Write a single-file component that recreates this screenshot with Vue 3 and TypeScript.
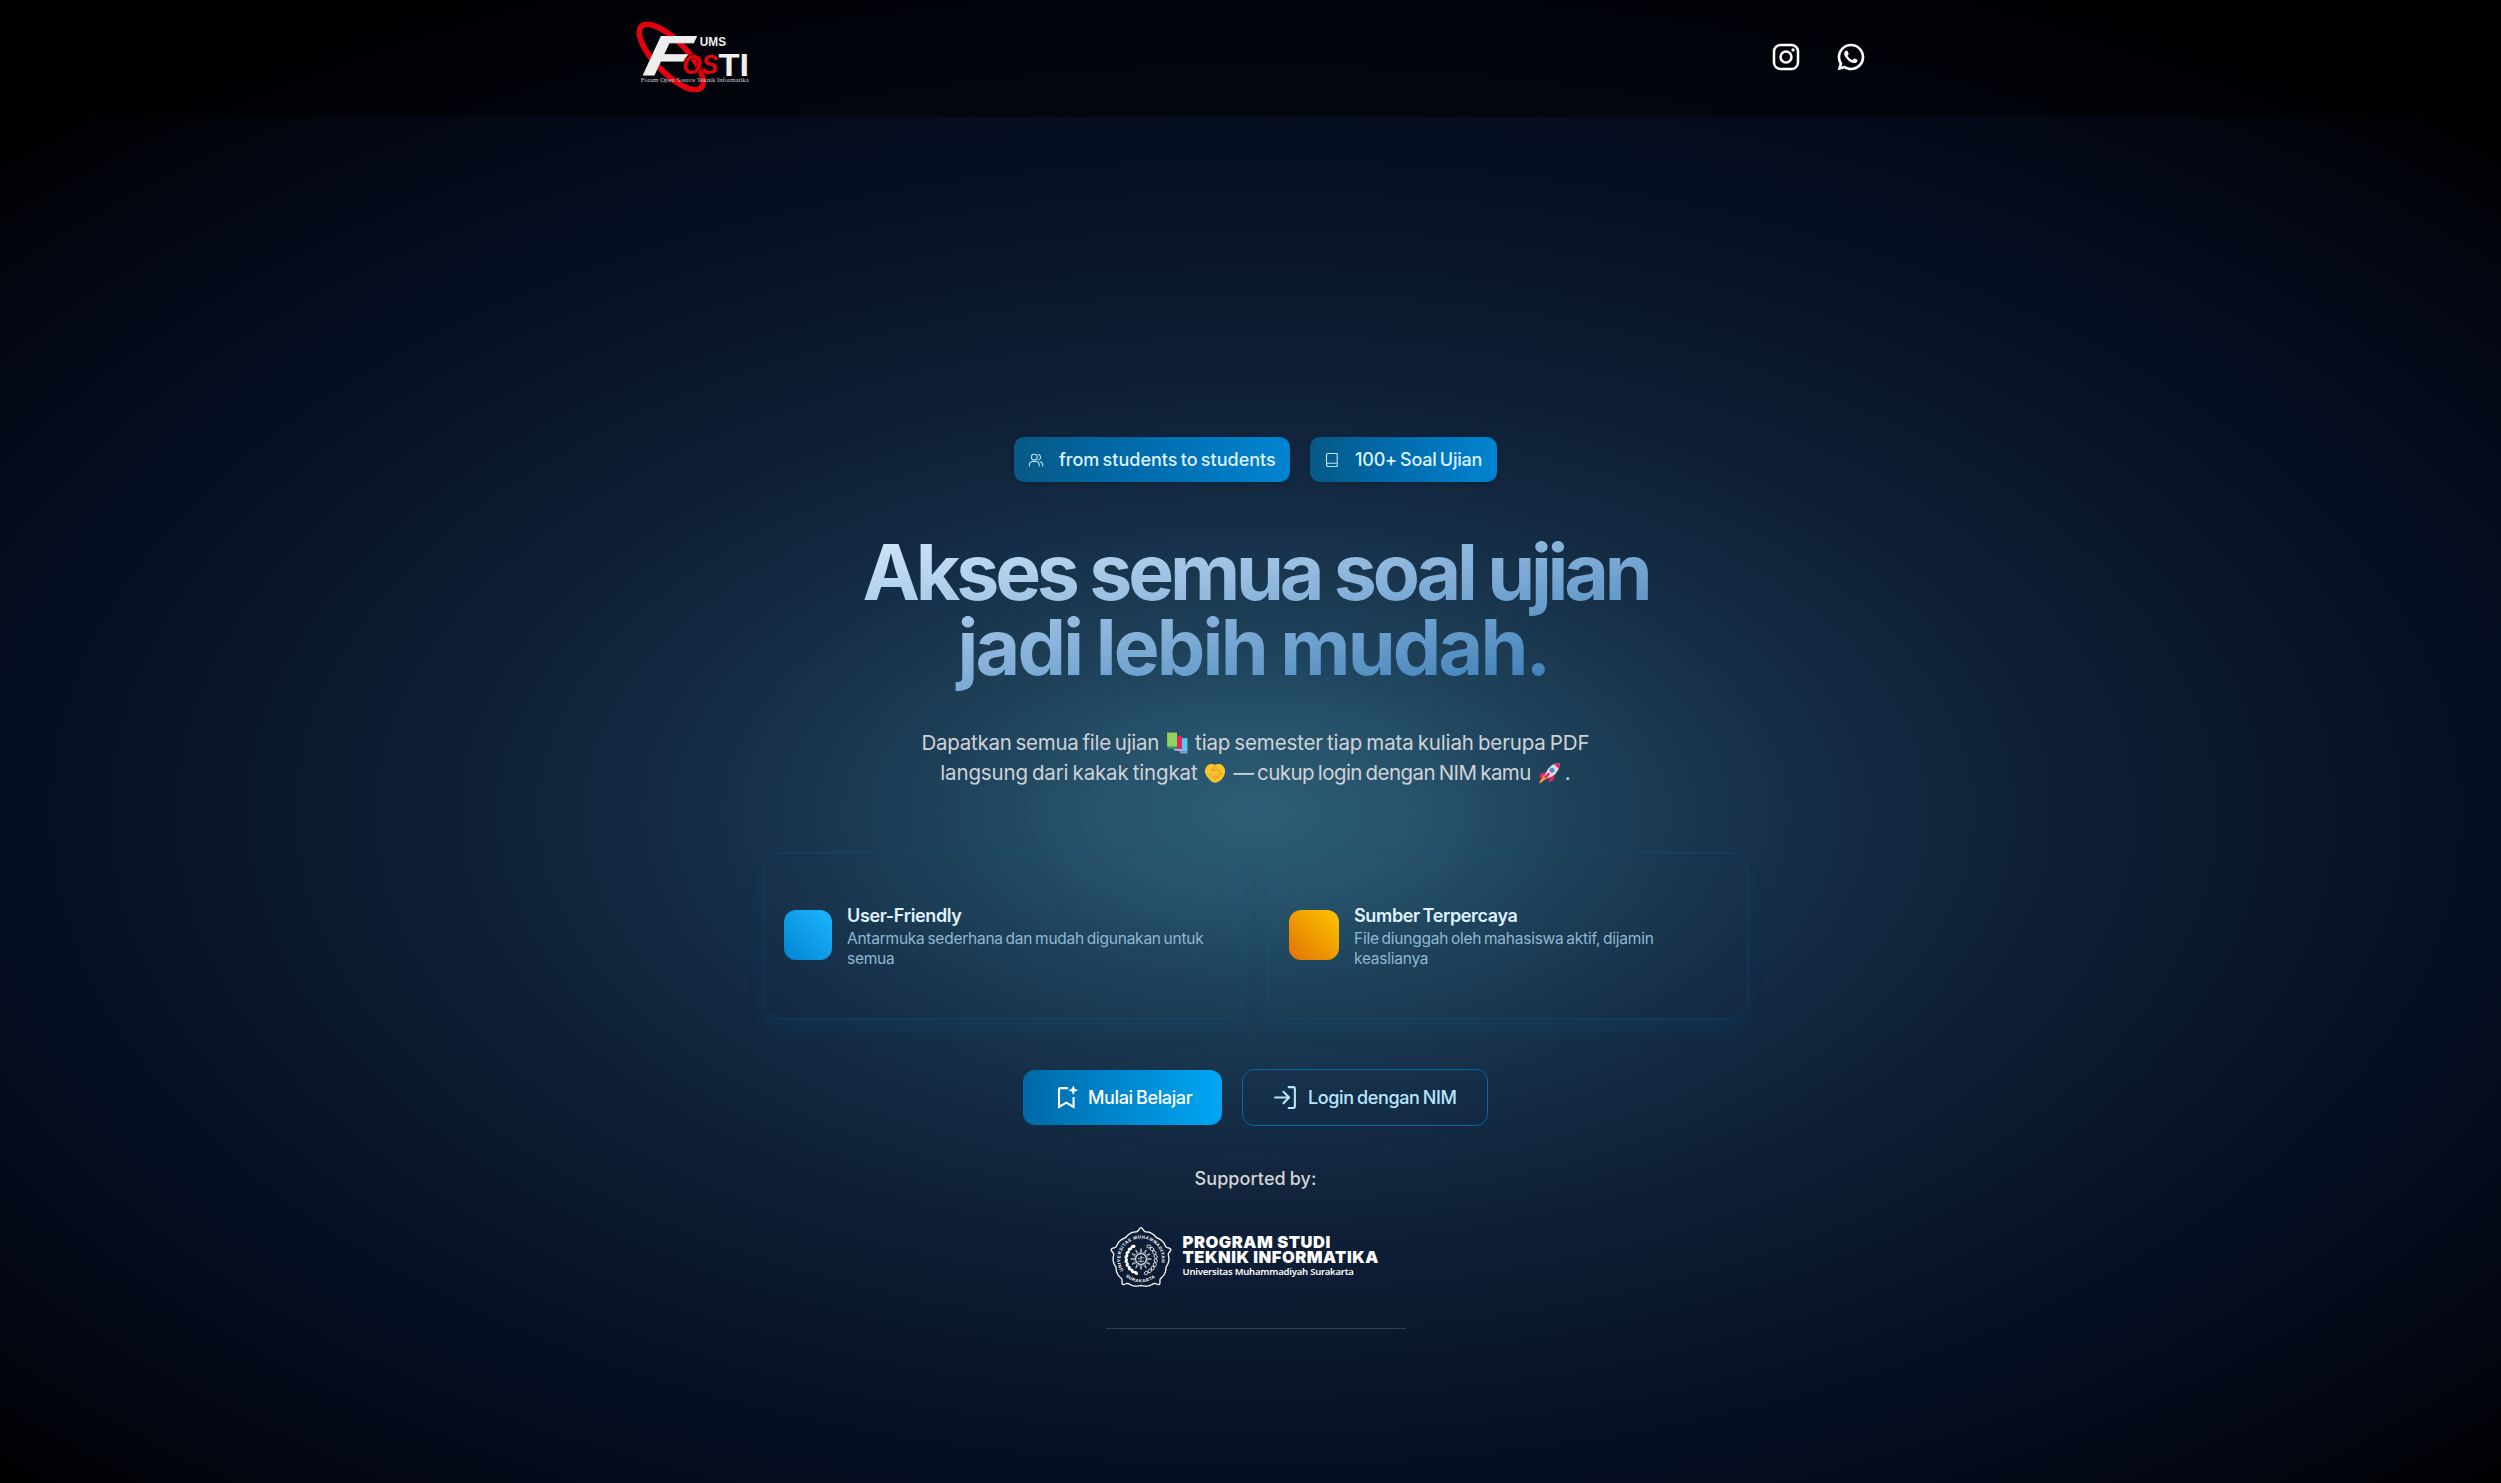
<script setup lang="ts">
interface Feature {
  title: string
  lines: string[]
  tone: string
}

const features: Feature[] = [
  {
    title: 'User-Friendly',
    lines: ['Antarmuka sederhana dan mudah digunakan untuk', 'semua'],
    tone: 'blue',
  },
  {
    title: 'Sumber Terpercaya',
    lines: ['File diunggah oleh mahasiswa aktif, dijamin', 'keaslianya'],
    tone: 'amber',
  },
]

// Outline of the university crest: five cusps joined by pairs of shallow lobes.
function crestOutline(): string {
  const points: string[] = []
  for (let deg = 0; deg < 360; deg += 2) {
    const delta = ((deg + 36) % 72) - 36
    const r =
      26.3 + 1.6 * Math.abs(Math.sin((5 * delta * Math.PI) / 180)) + 5 * Math.exp(-((delta / 5) ** 2))
    const a = ((deg - 90) * Math.PI) / 180
    points.push(`${(32 + r * Math.cos(a)).toFixed(2)},${(32 + r * Math.sin(a)).toFixed(2)}`)
  }
  return points.join(' ')
}

const outline = crestOutline()
const rays = Array.from({ length: 12 }, (_, i) => i * 30)
const leaves = Array.from({ length: 9 }, (_, i) => i * 16 + 20)
</script>

<template>
  <div class="page">
    <header class="topbar">
      <div class="bar-inner">
        <svg class="fosti" viewBox="78 66 340 210">
          <ellipse cx="184" cy="171" rx="129" ry="48" transform="rotate(46 184 171)" fill="none" stroke="#e3000f" stroke-width="17" />
          <text transform="translate(97 226) skewX(-12) scale(1.3 1)" class="lg-f">F</text>
          <text x="217" y="223" class="lg-os" textLength="108" lengthAdjust="spacingAndGlyphs">OS</text>
          <text x="326" y="227" class="lg-ti" textLength="92" lengthAdjust="spacingAndGlyphs">TI</text>
          <text x="270" y="137" class="lg-ums" textLength="79" lengthAdjust="spacingAndGlyphs">UMS</text>
          <text x="92" y="247" class="lg-sub" textLength="325" lengthAdjust="spacingAndGlyphs">Forum Open Source Teknik Informatika</text>
        </svg>
        <nav class="social">
          <svg viewBox="0 0 24 24" fill="none" stroke="#fff" stroke-width="1.9">
            <rect x="3" y="3" width="18" height="18" rx="4.9" />
            <circle cx="12" cy="12" r="4.1" />
            <circle cx="17.3" cy="6.7" r="1.25" fill="#fff" stroke="none" />
          </svg>
          <svg viewBox="0 0 24 24" fill="#fff">
            <path d="M7.25361 18.4944L7.97834 18.917C9.18909 19.623 10.5651 20 12.001 20C16.4193 20 20.001 16.4183 20.001 12C20.001 7.58172 16.4193 4 12.001 4C7.5827 4 4.00098 7.58172 4.00098 12C4.00098 13.4363 4.37821 14.8128 5.08466 16.0238L5.50704 16.7478L4.85355 19.1494L7.25361 18.4944ZM2.00516 22L3.35712 17.0315C2.49494 15.5536 2.00098 13.8345 2.00098 12C2.00098 6.47715 6.47813 2 12.001 2C17.5238 2 22.001 6.47715 22.001 12C22.001 17.5228 17.5238 22 12.001 22C10.1671 22 8.44851 21.5064 6.97086 20.6447L2.00516 22ZM8.39232 7.30833C8.5262 7.29892 8.66053 7.29748 8.79459 7.30402C8.84875 7.30758 8.90265 7.31384 8.95659 7.32007C9.11585 7.33846 9.29098 7.43545 9.34986 7.56894C9.64818 8.24536 9.93764 8.92565 10.2182 9.60963C10.2801 9.76062 10.2428 9.95633 10.125 10.1457C10.0652 10.2428 9.97128 10.379 9.86248 10.5183C9.74939 10.663 9.50599 10.9291 9.50599 10.9291C9.50599 10.9291 9.40738 11.0473 9.44455 11.1944C9.45903 11.25 9.50521 11.331 9.54708 11.3991C9.57027 11.4368 9.5918 11.4705 9.60577 11.4938C9.86169 11.9211 10.2057 12.3543 10.6259 12.7616C10.7459 12.8778 10.8631 12.9969 10.9887 13.1077C11.457 13.5209 11.9868 13.8583 12.559 14.1082L12.5641 14.1105C12.6486 14.1469 12.692 14.1668 12.8157 14.2193C12.8781 14.2457 12.9419 14.2685 13.0074 14.2858C13.0311 14.292 13.0554 14.2955 13.0798 14.2972C13.2415 14.3069 13.335 14.2032 13.3749 14.1555C14.0984 13.279 14.1646 13.2218 14.1696 13.2222V13.2238C14.2647 13.1236 14.4142 13.0888 14.5476 13.097C14.6085 13.1007 14.6691 13.1124 14.7245 13.1377C15.2563 13.3803 16.1258 13.7587 16.1258 13.7587L16.7073 14.0201C16.8047 14.0671 16.8936 14.1778 16.8979 14.2854C16.9005 14.3523 16.9077 14.4603 16.8838 14.6579C16.8525 14.9166 16.7738 15.2281 16.6956 15.3913C16.6406 15.5058 16.5694 15.6074 16.4866 15.6934C16.3743 15.81 16.2909 15.8808 16.1559 15.9814C16.0737 16.0426 16.0311 16.0714 16.0311 16.0714C15.8922 16.159 15.8139 16.2028 15.6484 16.2909C15.391 16.428 15.1066 16.5068 14.8153 16.5218C14.6296 16.5313 14.4444 16.5447 14.2589 16.5347C14.2507 16.5342 13.6907 16.4482 13.6907 16.4482C12.2688 16.0742 10.9538 15.3736 9.85034 14.402C9.62473 14.2034 9.4155 13.9885 9.20194 13.7759C8.31288 12.8908 7.63982 11.9364 7.23169 11.0336C7.03043 10.5884 6.90299 10.1116 6.90098 9.62098C6.89729 9.01405 7.09599 8.4232 7.46569 7.94186C7.53857 7.84697 7.60774 7.74855 7.72709 7.63586C7.85348 7.51651 7.93392 7.45244 8.02057 7.40811C8.13607 7.34902 8.26293 7.31742 8.39232 7.30833Z" />
          </svg>
        </nav>
      </div>
    </header>

    <main class="hero">
      <div class="badges">
        <div class="badge people">
          <svg viewBox="0 0 16 16" fill="none" stroke="#b8e6fe" stroke-width="1.1" stroke-linecap="round" stroke-linejoin="round">
            <circle cx="6.3" cy="5.2" r="2.9" />
            <path d="M1.4 14v-1.2a3.4 3.4 0 0 1 3.4-3.3h3a3.4 3.4 0 0 1 3.4 3.3V14M10.4 2.4a2.9 2.9 0 0 1 0 5.6M12.2 9.7a3.4 3.4 0 0 1 2.5 3.2V14" />
          </svg>
          <span>from students to students</span>
        </div>
        <div class="badge book">
          <svg viewBox="0 0 16 16" fill="none" stroke="#b8e6fe" stroke-width="1.1" stroke-linejoin="round">
            <path d="M4.2 1.5h9v13h-9a1.7 1.7 0 0 1-1.7-1.7V3.2a1.7 1.7 0 0 1 1.7-1.7zM2.5 12.8a1.7 1.7 0 0 1 1.7-1.6h9" />
          </svg>
          <span class="exams">100+ Soal Ujian</span>
        </div>
      </div>

      <h1><span class="head-a">Akses semua soal ujian</span><br /><span class="head-b">jadi lebih mudah.</span></h1>

      <p class="lead">
        <span class="row"><span class="lead-a">Dapatkan semua file ujian</span>
          <svg class="emoji" viewBox="0 0 20 20">
            <path d="M12 5.5h7.5v12H12z" fill="#5cc8ee" /><path d="M12 17.5h7.5v2H13z" fill="#8f8fd8" />
            <path d="M7 3.5h7.5v12H7z" fill="#e0245e" /><path d="M7 15.5h7.5v1.6H8z" fill="#a8b8e0" />
            <path d="M1 .5h9v13H1z" fill="#8ed35b" /><path d="M1 13.5h9v2H2z" fill="#2f8f6f" />
          </svg>
          <span class="lead-b">tiap semester tiap mata kuliah berupa PDF</span></span>
        <span class="row"><span class="lead-c">langsung dari kakak tingkat</span>
          <svg class="emoji" viewBox="0 0 20 20">
            <path d="M.8 8.5C.8 5.5 2.5 3.2 4.5 2.2c2-.8 3.7.3 5.5.3 1.8 0 3.500-1.100 5.500-.3C17.500 3.200 19.200 5.500 19.200 8.500c0 5-4.800 10.300-8.700 10.300-3.500 0-5-2-6.500-4C2.500 13 .8 11 .8 8.500z" fill="#fcc32c" />
            <path d="M10 4.200L7 7.500c1.500 1.500 3.500.3 4.500-1l5 5M5.500 12l1.500-1.500M7.500 14.200l1.500-1.500M9.500 16.200l1.500-1.500M13 14.500l-2-2M14.700 12.800l-2.200-2.200" fill="none" stroke="#d98514" stroke-width=".9" stroke-linecap="round" />
          </svg>
          <span class="lead-d">— cukup login dengan NIM kamu</span>
          <svg class="emoji last" viewBox="0 0 20 20">
            <path d="M6.500 9L2 11l-.5 4 5-2zM11 13.500l-1.500 5 4-1.500 2-5z" fill="#e8265f" />
            <path d="M5 12.500L1 18.500l1 .8 5.500-4z" fill="#ff9a1f" />
            <path d="M19.500.8c-5 0-9.500 3-12 8.200l-2 4.500 2 2 4.500-2C17 11 19.800 6 19.500.8z" fill="#dcdbe4" />
            <path d="M19.500.8c-2 0-3.700.4-5 1l4 4c.8-1.600 1.100-3.300 1-5z" fill="#e8265f" />
            <path d="M5.500 13.500l2 2 3.500-4.500-1.500-1.500z" fill="#e8265f" />
            <circle cx="12.700" cy="7.500" r="2" fill="#3d8ee8" stroke="#7a7690" stroke-width=".6" />
          </svg>
          <span>.</span></span>
      </p>

      <section class="cards">
        <article v-for="item in features" :key="item.title" class="card" :class="item.tone">
          <div class="tile"></div>
          <div class="copy">
            <h3>{{ item.title }}</h3>
            <p v-for="line in item.lines" :key="line">{{ line }}</p>
          </div>
        </article>
      </section>

      <div class="actions">
        <button class="btn primary">
          <svg viewBox="0 0 24 24" fill="none" stroke="#fff" stroke-width="2">
            <path d="M13.5 3H6a1.200 1.200 0 0 0-1.200 1.200V21l7-4 7 4V11.500" />
            <path d="M18.500 1l1.100 2.900 2.900 1.100-2.900 1.100-1.100 2.900-1.100-2.900L14.500 5l2.900-1.100z" fill="#fff" stroke-width=".6" />
          </svg>
          <span>Mulai Belajar</span>
        </button>
        <button class="btn ghost">
          <svg viewBox="0 0 24 24" fill="none" stroke="#b8e6fe" stroke-width="2" stroke-linecap="round" stroke-linejoin="round">
            <path d="M15 2h4.500A1.500 1.500 0 0 1 21 3.500v17a1.500 1.500 0 0 1-1.500 1.500H15M2 12h13M10 6.500l5.500 5.500-5.500 5.500" />
          </svg>
          <span>Login dengan NIM</span>
        </button>
      </div>

      <div class="support">Supported by:</div>

      <div class="partner">
        <svg class="crest" viewBox="0 0 64 64" fill="none" stroke="#fff">
          <defs>
            <path id="arc-top" d="M14.500 43.500A20.800 20.800 0 1 1 49.500 43.500" />
            <path id="arc-bottom" d="M16.500 49.500A23.500 23.500 0 0 0 47.500 49.500" />
          </defs>
          <polygon :points="outline" stroke-width="1.3" />
          <text class="ring"><textPath href="#arc-top" textLength="80">UNIVERSITAS MUHAMMADIYAH</textPath></text>
          <text class="ring"><textPath href="#arc-bottom" textLength="32">SURAKARTA</textPath></text>
          <g v-for="a in leaves" :key="a">
            <ellipse cx="32" cy="46.800" rx="2.500" ry="1.600" :transform="`rotate(${a} 32 32) rotate(25 32 46.800)`" fill="#fff" stroke="none" />
            <ellipse cx="32" cy="46.800" rx="2" ry="1.500" :transform="`rotate(${-a} 32 32) rotate(-25 32 46.800)`" stroke-width=".8" />
          </g>
          <path v-for="a in rays" :key="`r${a}`" d="M31 26.500L32 21.500l1 5z" :transform="`rotate(${a} 32 32)`" stroke-width=".6" />
          <circle cx="32" cy="32" r="5.300" stroke-width=".8" />
          <path d="M29 30.500c1 2 2 2 3 0s2 2 3 0M29 34c2 1 4 1 6 0M32 29v6" stroke-width=".7" />
        </svg>
        <div class="partner-name">
          <strong class="program">PROGRAM STUDI</strong>
          <strong class="dept">TEKNIK INFORMATIKA</strong>
          <small>Universitas Muhammadiyah Surakarta</small>
        </div>
      </div>
      <hr />
    </main>
  </div>
</template>

<style>
body {
  margin: 0;
  background: #000;
}
</style>

<style scoped>
.page {
  box-sizing: border-box;
  height: 1483px;
  padding-left: 10px;
  overflow: hidden;
  font-family: Inter, sans-serif;
  background: radial-gradient(
    ellipse 1256px 680px at 1256px 813px,
    #2d5d76 0%,
    #27526b 13%,
    #1f445d 23%,
    #1b3a51 32%,
    #152d46 44%,
    #11243c 56%,
    #0d1c35 67%,
    #0a192b 78%,
    #071124 92%,
    #050d1f 104%,
    #030713 122%,
    #000 142%
  );
}
.topbar {
  height: 117px;
  margin-left: -10px;
  padding-left: 10px;
  background: rgba(0, 0, 0, 0.5);
}
.bar-inner {
  display: flex;
  justify-content: space-between;
  align-items: center;
  width: 1240px;
  height: 114px;
  margin: 0 auto;
}
.fosti { width: 113px; height: 70px; }
.lg-f { font: italic 700 168px "Liberation Sans", sans-serif; fill: #eee; stroke: #eee; stroke-width: 3; }
.lg-os { font: italic 700 84px "Liberation Sans", sans-serif; fill: #e3000f; stroke: #05070f; stroke-width: 4; paint-order: stroke; }
.lg-ti { font: 700 93px "Liberation Sans", sans-serif; fill: #eee; }
.lg-ums { font: 700 38px "Liberation Sans", sans-serif; fill: #eee; }
.lg-sub { font: 18px "Liberation Serif", serif; fill: #ccc; }
.social { display: flex; gap: 33px; margin-right: 9px; }
.social svg { width: 32px; height: 32px; }
.hero { display: flex; flex-direction: column; align-items: center; padding-top: 320px; }
.badges { display: flex; gap: 20px; height: 45px; }
.badge {
  display: flex;
  align-items: center;
  box-sizing: border-box;
  padding-left: 14px;
  border-radius: 10px;
  color: #dff2fe;
  font-size: 18px;
  font-weight: 500;
  word-spacing: -1.5px;
  white-space: nowrap;
  background: linear-gradient(to right, #075985, #0069a8 40%, #0084d1);
  box-shadow: 0 2px 6px rgba(0, 0, 0, 0.15);
}
.badge svg { width: 16px; height: 16px; margin-right: 15px; }
.people { width: 276px; }
.book { width: 187px; }
.exams { letter-spacing: -0.2px; }
h1 {
  margin: 53px 0 0;
  padding-bottom: 10px;
  font-size: 77px;
  line-height: 75px;
  font-weight: 700;
  text-align: center;
  white-space: nowrap;
  color: transparent;
  background: linear-gradient(to bottom right, #d3e8fa, #83afd8 50%, #2b73af);
  background-clip: text;
}
.head-a { letter-spacing: -4.2px; word-spacing: -0.5px; }
.head-b { margin-right: 5px; letter-spacing: -2.8px; word-spacing: -1px; }
.lead {
  margin: 33px 0 0;
  color: #d0d2d7;
  font-size: 20.5px;
  line-height: 30px;
  word-spacing: -1.5px;
}
.row { display: flex; justify-content: center; align-items: center; height: 30px; white-space: nowrap; }
.lead-a { letter-spacing: -0.28px; }
.lead-b { letter-spacing: -0.14px; }
.lead-c { letter-spacing: -0.15px; }
.lead-d { letter-spacing: -0.56px; }
.emoji { width: 22px; height: 22px; margin: 0 7px; }
.emoji.last { margin: 0 5px 0 7px; }
.cards { display: flex; gap: 25px; margin-top: 64px; }
.card {
  box-sizing: border-box;
  display: flex;
  align-items: center;
  width: 480px;
  height: 167px;
  padding: 0 0 2px 20px;
  border: 1px solid rgba(3, 105, 161, 0.28);
  border-radius: 20px;
  box-shadow: 0 12px 19px -4px rgba(2, 90, 140, 0.18);
}
.tile { width: 50px; height: 50px; border-radius: 12px; }
.blue .tile { width: 48px; background: linear-gradient(to top right, #0084d1, #1fb6ff); }
.amber .tile { background: linear-gradient(to top right, #e17100, #fdc700); }
.copy { padding: 2px 0 0 15px; white-space: nowrap; }
h3 {
  margin: 0;
  font-size: 18px;
  line-height: 26px;
  font-weight: 600;
  letter-spacing: -0.35px;
  word-spacing: -1.5px;
  color: #dff2fe;
}
.copy p {
  margin: 0;
  font-size: 15.5px;
  line-height: 20px;
  letter-spacing: -0.24px;
  word-spacing: -1.3px;
  color: #8fb8d3;
}
.actions { display: flex; align-items: center; gap: 20px; margin-top: 50px; }
.btn {
  display: flex;
  align-items: center;
  box-sizing: border-box;
  padding: 0;
  border: 0;
  border-radius: 12px;
  font: 500 18px Inter, sans-serif;
  letter-spacing: -0.36px;
  word-spacing: -1.2px;
  white-space: nowrap;
}
.primary { width: 199px; height: 55px; padding-left: 31px; color: #fff; background: linear-gradient(to right, #0069a8, #00a6f4); }
.ghost { width: 246px; height: 57px; padding-left: 30px; color: #b8e6fe; border: 1px solid #0069a8; background: transparent; }
.btn svg { width: 25px; height: 25px; margin-right: 9px; }
.ghost svg { margin-right: 10px; }
.support { margin-top: 39px; color: #d4d4d4; font-size: 18px; line-height: 28px; font-weight: 500; letter-spacing: 0.08px; word-spacing: -1px; }
.partner { display: flex; width: 300px; height: 64px; margin-top: 34px; padding-left: 6px; }
.crest { width: 64px; height: 64px; }
.ring { font: 700 4.5px "Liberation Sans", sans-serif; fill: #fff; stroke: none; }
.partner-name { padding: 8px 0 0 10px; color: #fff; white-space: nowrap; }
.partner-name strong { display: block; font-size: 16.5px; line-height: 15px; font-weight: 900; }
.program { letter-spacing: 0.55px; }
.dept { letter-spacing: 0.5px; }
.partner-name small { display: block; padding: 1px 0 0 0; font: 600 9.5px/12px "Noto Sans", sans-serif; letter-spacing: -0.21px; }
hr { width: 300px; height: 1px; margin: 37px 0 0; border: 0; background: #323e4f; }
</style>
